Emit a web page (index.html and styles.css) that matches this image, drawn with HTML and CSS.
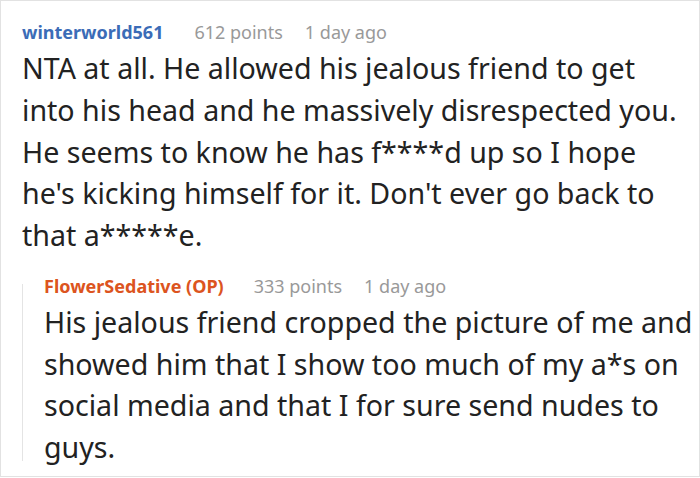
FILE: index.html
```html
<!DOCTYPE html>
<html>
<head>
<meta charset="utf-8">
<link rel="stylesheet" href="styles.css">
</head>
<body>
<div class="card">
  <div class="comment">
    <div class="meta">
      <span class="user">winterworld561</span>
      <span class="info">612 points</span>
      <span class="info">1 day ago</span>
    </div>
    <p class="text">NTA at all. He allowed his jealous friend to get into his head and he massively disrespected you. He seems to know he has f****d up so I hope he's kicking himself for it. Don't ever go back to that a*****e.</p>
    <div class="reply">
      <div class="meta">
        <span class="user op">FlowerSedative (OP)</span>
        <span class="info">333 points</span>
        <span class="info">1 day ago</span>
      </div>
      <p class="text">His jealous friend cropped the picture of me and showed him that I show too much of my a*s on social media and that I for sure send nudes to guys.</p>
    </div>
  </div>
</div>
</body>
</html>
```

FILE: styles.css
```css
html, body {
  margin: 0;
  padding: 0;
  background: #fff;
}
.card {
  width: 700px;
  height: 477px;
  box-sizing: border-box;
  border: 1px solid #e2e2e2;
  font-family: "Noto Sans", sans-serif;
  color: #222;
  overflow: hidden;
}
.comment {
  width: 664px;
  padding: 19px 0 0 21px;
}
.meta {
  display: flex;
  font-size: 18px;
  line-height: 24px;
  height: 24px;
  white-space: nowrap;
}
.user {
  font-weight: 700;
  color: #3b6cb7;
  margin-right: 31px;
}
.user.op {
  color: #dc5420;
  margin-right: 30px;
}
.info {
  color: #999;
  margin-right: 22px;
}
.text {
  margin: 3px 0 0 0;
  font-size: 28.6px;
  line-height: 41.75px;
}
.reply {
  position: relative;
  margin-top: 18px;
  margin-right: -22px;
  padding-left: 22px;
}
.reply::before {
  content: "";
  position: absolute;
  left: 0;
  top: 10px;
  bottom: 7px;
  width: 1px;
  background: #e4e4e4;
}
```
